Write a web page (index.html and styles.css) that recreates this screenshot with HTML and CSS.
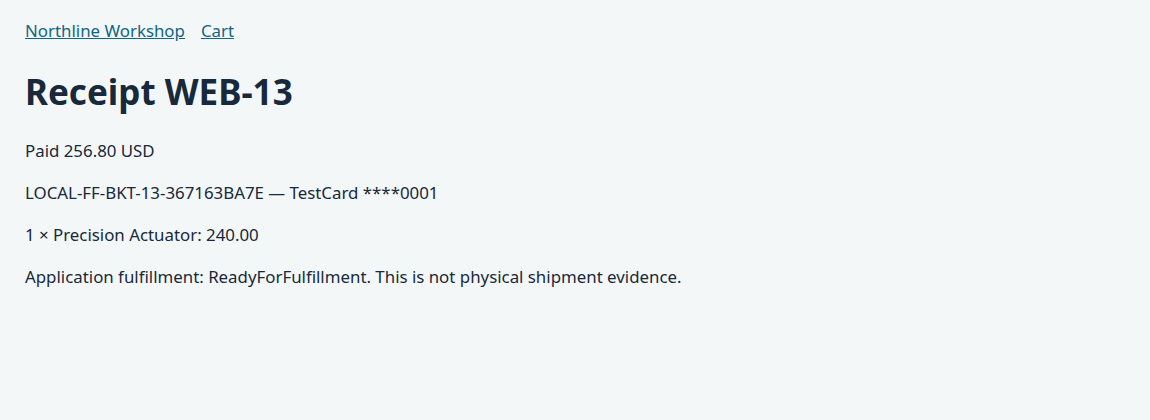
FILE: index.html
```html
<!DOCTYPE html>
<html>
	<head>
		<meta charset="UTF-8">
		<title>Receipt WEB-13</title>
		<link rel="stylesheet" href="styles.css">
	</head>

	<body>
		<nav class="nav">
			<a href="#">Northline Workshop</a>
			<a href="#">Cart</a>
		</nav>
		<main class="receipt">
			<h1>Receipt WEB-13</h1>
			<p>Paid 256.80 USD</p>
			<p>LOCAL-FF-BKT-13-367163BA7E — TestCard ****0001</p>
			<p>1 × Precision Actuator: 240.00</p>
			<p>Application fulfillment: ReadyForFulfillment. This is not physical shipment evidence.</p>
		</main>
	</body>
</html>
```

FILE: styles.css
```css
body {
	margin: 0;
	padding: 18px 25px;
	background: #f4f7f8;
	color: #17293a;
	font-family: "Noto Sans", "Open Sans", sans-serif;
	font-size: 16.85px;
	line-height: 26px;
}

.nav {
	display: flex;
	gap: 16px;
}

.nav a {
	color: #0f6584;
}

.receipt h1 {
	margin: 27px 0 25px;
	font-size: 35px;
	line-height: 42px;
	font-weight: 700;
}

.receipt p {
	margin: 16px 0;
}
```
